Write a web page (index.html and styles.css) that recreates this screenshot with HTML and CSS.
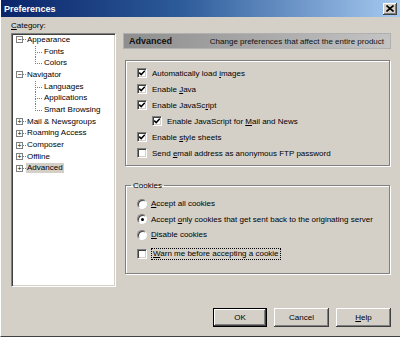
FILE: index.html
```html
<!DOCTYPE html>
<html lang="en">
<head>
    <meta charset="UTF-8">
    <title>Preferences</title>
    <link rel="stylesheet" href="styles.css">
</head>
<body>
    <div class="window">
        <div class="titlebar">
            <span class="title">Preferences</span>
            <span class="close">
                <svg width="8" height="7" viewBox="0 0 8 7"><path d="M0.5 0.5 L7.5 6.5 M7.5 0.5 L0.5 6.5" stroke="#000" stroke-width="1.6"/></svg>
            </span>
        </div>

        <div class="main">
            <div class="left">
                <div class="cat-label"><u>C</u>ategory:</div>
                <div class="tree">
                    <div class="node"><span class="box">&minus;</span><span class="stub"></span><span class="text">Appearance</span></div>
                    <div class="child"><span class="text">Fonts</span></div>
                    <div class="child last"><span class="text">Colors</span></div>
                    <div class="node"><span class="box">&minus;</span><span class="stub"></span><span class="text">Navigator</span></div>
                    <div class="child"><span class="text">Languages</span></div>
                    <div class="child"><span class="text">Applications</span></div>
                    <div class="child last"><span class="text">Smart Browsing</span></div>
                    <div class="node"><span class="box">+</span><span class="stub"></span><span class="text">Mail &amp; Newsgroups</span></div>
                    <div class="node"><span class="box">+</span><span class="stub"></span><span class="text">Roaming Access</span></div>
                    <div class="node"><span class="box">+</span><span class="stub"></span><span class="text">Composer</span></div>
                    <div class="node"><span class="box">+</span><span class="stub"></span><span class="text">Offline</span></div>
                    <div class="node"><span class="box">+</span><span class="stub"></span><span class="text selected">Advanced</span></div>
                </div>
            </div>

            <div class="right">
                <div class="header">
                    <span class="header-title">Advanced</span>
                    <span class="header-desc">Change preferences that affect the entire product</span>
                </div>

                <div class="group">
                    <div class="row"><span class="check on"></span><span>Automatically load <u>i</u>mages</span></div>
                    <div class="row"><span class="check on"></span><span>Enable <u>J</u>ava</span></div>
                    <div class="row"><span class="check on"></span><span>Enable JavaSc<u>r</u>ipt</span></div>
                    <div class="row indent"><span class="check on"></span><span>Enable JavaScript for <u>M</u>ail and News</span></div>
                    <div class="row"><span class="check on"></span><span>Enable <u>s</u>tyle sheets</span></div>
                    <div class="row"><span class="check"></span><span>Send <u>e</u>mail address as anonymous FTP password</span></div>
                </div>

                <fieldset class="group cookies">
                    <legend>Cookies</legend>
                    <div class="row radio-row"><span class="radio"></span><span><u>A</u>ccept all cookies</span></div>
                    <div class="row radio-row"><span class="radio on"></span><span>Accept <u>o</u>nly cookies that get sent back to the originating server</span></div>
                    <div class="row radio-row"><span class="radio"></span><span><u>D</u>isable cookies</span></div>
                    <div class="row warn"><span class="check"></span><span class="focus"><u>W</u>arn me before accepting a cookie</span></div>
                </fieldset>
            </div>
        </div>

        <div class="buttons">
            <span class="btn default">OK</span>
            <span class="btn">Cancel</span>
            <span class="btn"><span><u>H</u>elp</span></span>
        </div>
    </div>
</body>
</html>
```

FILE: styles.css
```css
body, html {
    margin: 0;
    padding: 0;
    background-color: #d4d0c8;
    font-family: 'Liberation Sans', Arial, sans-serif;
    font-size: 8px;
    color: #000;
}
.window {
    width: 400px;
    height: 337px;
    display: flex;
    flex-direction: column;
    box-sizing: border-box;
    border-bottom: 1px solid #404040;
    border-left: 1px solid #fff;
    overflow: hidden;
}
.titlebar {
    height: 17px;
    flex: none;
    display: flex;
    align-items: center;
    justify-content: space-between;
    padding: 0 3px 0 3px;
    background: linear-gradient(to right, #0a246a 0%, #2d5b9a 45%, #a6caf0 100%);
}
.title {
    color: #fff;
    font-weight: bold;
    font-size: 9px;
}
.close {
    width: 14px;
    height: 12px;
    display: flex;
    align-items: center;
    justify-content: center;
    background: #d4d0c8;
    box-shadow: inset -1px -1px #404040, inset 1px 1px #fff, inset -2px -2px #808080;
}
.main {
    display: flex;
    gap: 7px;
    padding: 3px 9px 0 10px;
}
.left {
    width: 105px;
    flex: none;
}
.cat-label {
    height: 13px;
    line-height: 11px;
}
.tree {
    height: 254px;
    box-sizing: border-box;
    background: #fff;
    border-top: 1px solid #808080;
    border-left: 1px solid #808080;
    border-right: 1px solid #fff;
    border-bottom: 1px solid #fff;
    box-shadow: inset 1px 1px #404040, inset -1px -1px #d4d0c8;
    padding: 0 0 0 4px;
}
.node, .child {
    height: 11.7px;
    display: flex;
    align-items: center;
    position: relative;
}
.box {
    width: 7px;
    height: 7px;
    box-sizing: border-box;
    border: 1px solid #808080;
    font-size: 7px;
    line-height: 5px;
    text-align: center;
    flex: none;
}
.stub {
    width: 3px;
    border-top: 1px dotted #808080;
    flex: none;
}
.text {
    padding: 0 1px;
    line-height: 10px;
}
.selected {
    background: #d4d0c8;
}
.child {
    padding-left: 27px;
}
.child::before {
    content: "";
    position: absolute;
    left: 19px;
    top: 0;
    width: 6px;
    height: 50%;
    border-left: 1px dotted #808080;
    border-bottom: 1px dotted #808080;
}
.child::after {
    content: "";
    position: absolute;
    left: 19px;
    top: 50%;
    height: 50%;
    border-left: 1px dotted #808080;
}
.child.last::after {
    display: none;
}
.right {
    width: 268px;
    flex: none;
    padding-top: 13px;
}
.header {
    height: 16px;
    box-sizing: border-box;
    display: flex;
    align-items: center;
    justify-content: space-between;
    padding: 0 6px 0 5px;
    background: linear-gradient(to right, #8e8e8e 0%, #a8a8a8 50%, #c4c4c4 100%);
    border: 1px solid #b0b0b0;
}
.header-title {
    font-weight: bold;
    font-size: 9px;
    color: #111;
}
.header-desc {
    color: #111;
}
.group {
    margin: 11px 1px 0 2px;
    height: 106px;
    box-sizing: border-box;
    border: 1px solid #808080;
    box-shadow: inset 1px 1px #fff, 1px 1px #fff;
    padding: 4px 0 0 11px;
}
.row {
    height: 16px;
    display: flex;
    align-items: center;
}
.row.indent {
    padding-left: 15px;
}
.check {
    width: 10px;
    height: 10px;
    box-sizing: border-box;
    flex: none;
    margin-right: 5px;
    background: #fff;
    border-top: 1px solid #808080;
    border-left: 1px solid #808080;
    border-right: 1px solid #fff;
    border-bottom: 1px solid #fff;
    box-shadow: inset 1px 1px #404040, inset -1px -1px #d4d0c8;
}
.check.on {
    background: #fff url("data:image/svg+xml,%3Csvg xmlns='http://www.w3.org/2000/svg' width='8' height='8'%3E%3Cpath d='M1.2 3.6 L3.2 5.6 L6.8 1.8' fill='none' stroke='%23000' stroke-width='1.5'/%3E%3C/svg%3E") center no-repeat;
}
.cookies {
    margin-top: 15px;
    height: 93px;
    min-width: 0;
    padding: 6px 0 0 11px;
}
.cookies legend {
    padding: 0 2px;
    margin-left: -6px;
    line-height: 9px;
}
.radio-row {
    height: 15.5px;
}
.radio {
    width: 10px;
    height: 10px;
    box-sizing: border-box;
    flex: none;
    margin-right: 4px;
    border-radius: 50%;
    background: #fff;
    border: 1px solid;
    border-color: #808080 #fff #fff #808080;
    box-shadow: inset 1px 1px #404040;
    display: flex;
    align-items: center;
    justify-content: center;
}
.radio.on::after {
    content: "";
    width: 3px;
    height: 3px;
    border-radius: 50%;
    background: #000;
}
.row.warn {
    margin-top: 3px;
}
.focus {
    outline: 1px dotted #000;
    outline-offset: 0;
    line-height: 10px;
    padding: 0 1px;
}
.buttons {
    display: flex;
    justify-content: flex-end;
    gap: 7px;
    padding: 21px 9px 0 0;
}
.btn {
    width: 55px;
    height: 19px;
    box-sizing: border-box;
    display: flex;
    align-items: center;
    justify-content: center;
    background: #d4d0c8;
    box-shadow: inset -1px -1px #404040, inset 1px 1px #fff, inset -2px -2px #808080;
}
.btn.default {
    width: 54px;
    border: 1px solid #000;
    box-shadow: inset -1px -1px #404040, inset 1px 1px #fff, inset -2px -2px #808080;
}
```
